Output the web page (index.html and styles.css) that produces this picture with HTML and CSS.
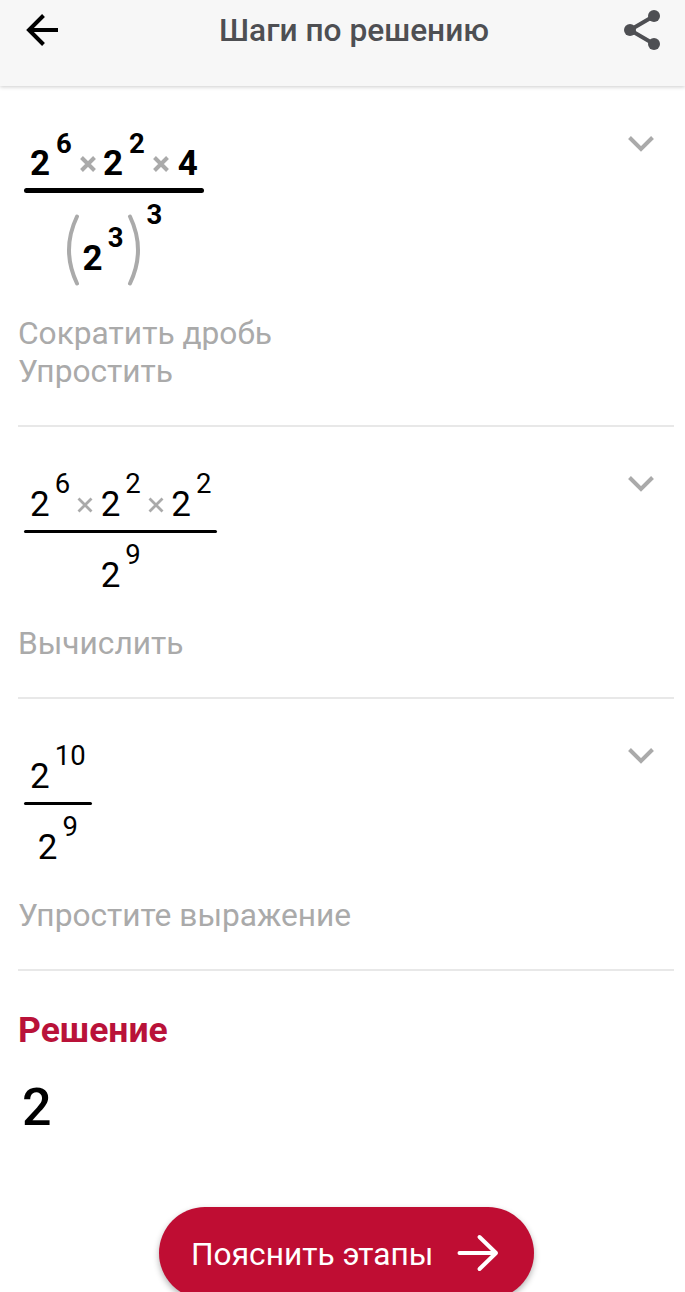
FILE: index.html
```html
<!DOCTYPE html>
<html lang="ru">
<head>
<meta charset="utf-8">
<title>Шаги по решению</title>
<link rel="stylesheet" href="styles.css">
</head>
<body>
<div class="screen">
  <header class="header">
    <svg class="back" width="34" height="34" viewBox="0 0 34 34"><path d="M18.500 2.500 4 17l14.500 14.500M4 17h29" /></svg>
    <h1 class="title">Шаги по решению</h1>
    <svg class="share" width="38" height="42" viewBox="0 0 38 42"><path d="M31 7 7 21l24 14"/><circle cx="31" cy="7" r="6"/><circle cx="7" cy="21" r="6"/><circle cx="31" cy="35" r="6"/></svg>
  </header>
  <main class="steps">
    <section class="step step-first">
      <div class="fraction bold">
        <div class="row">
          <span class="base">2</span><span class="exp">6</span>
          <svg class="times" width="16" height="16" viewBox="0 0 16 16"><path d="m1.500 1.500 13 13m0-13-13 13"/></svg>
          <span class="base">2</span><span class="exp">2</span>
          <svg class="times" width="16" height="16" viewBox="0 0 16 16"><path d="m1.500 1.500 13 13m0-13-13 13"/></svg>
          <span class="base last">4</span>
        </div>
        <div class="bar"></div>
        <div class="row group">
          <svg class="paren" width="14" height="72" viewBox="0 0 14 72"><path d="M11 2.500Q-5 36 11 69.500"/></svg>
          <span class="base">2</span><span class="exp">3</span>
          <svg class="paren right" width="14" height="72" viewBox="0 0 14 72"><path d="M3 2.500Q19 36 3 69.500"/></svg>
          <span class="exp outer">3</span>
        </div>
      </div>
      <svg class="chevron" width="28" height="18" viewBox="0 0 28 18"><path d="m2.500 2.500 11.500 11.500L25.500 2.500"/></svg>
      <p class="label">Сократить дробь<br>Упростить</p>
    </section>
    <section class="step">
      <div class="fraction">
        <div class="row">
          <span class="base">2</span><span class="exp">6</span>
          <svg class="times" width="16" height="16" viewBox="0 0 16 16"><path d="m1.500 1.500 13 13m0-13-13 13"/></svg>
          <span class="base">2</span><span class="exp">2</span>
          <svg class="times" width="16" height="16" viewBox="0 0 16 16"><path d="m1.500 1.500 13 13m0-13-13 13"/></svg>
          <span class="base">2</span><span class="exp">2</span>
        </div>
        <div class="bar"></div>
        <div class="row"><span class="base">2</span><span class="exp">9</span></div>
      </div>
      <svg class="chevron" width="28" height="18" viewBox="0 0 28 18"><path d="m2.500 2.500 11.500 11.500L25.500 2.500"/></svg>
      <p class="label">Вычислить</p>
    </section>
    <section class="step">
      <div class="fraction">
        <div class="row"><span class="base">2</span><span class="exp">10</span></div>
        <div class="bar"></div>
        <div class="row"><span class="base">2</span><span class="exp">9</span></div>
      </div>
      <svg class="chevron" width="28" height="18" viewBox="0 0 28 18"><path d="m2.500 2.500 11.500 11.500L25.500 2.500"/></svg>
      <p class="label">Упростите выражение</p>
    </section>
  </main>
  <section class="solution">
    <h2 class="solution-title">Решение</h2>
    <p class="answer">2</p>
  </section>
  <button class="explain">
    <span>Пояснить этапы</span>
    <svg width="42" height="38" viewBox="0 0 42 38"><path d="M2.500 19H39M22.500 3 39 19 22.500 35"/></svg>
  </button>
</div>
</body>
</html>
```
FILE: styles.css
```css
* { box-sizing: border-box; }
body { margin: 0; background: #fff; font-family: Roboto, "Noto Sans", sans-serif; color: #000; }
h1, h2, p { margin: 0; }
svg { display: block; flex: none; fill: none; }
.screen { display: flex; flex-direction: column; height: 1292px; overflow: hidden; }

.header {
  display: flex; align-items: flex-start; flex: none;
  height: 86px; padding: 0 24px 0 25px; background: #f7f7f7;
  box-shadow: 0 1px 4px rgba(0, 0, 0, .2);
}
.back { margin-top: 13px; stroke: #000; stroke-width: 4; }
.title { margin: 12px auto 0 160px; font-size: 31.7px; line-height: 38px; font-weight: 500; color: #4e4f53; white-space: nowrap; }
.share { margin-top: 9px; stroke: #4e4f53; stroke-width: 4; }
.share circle { fill: #4e4f53; stroke: none; }

.steps { flex: none; padding: 0 11px 0 18px; }
.step {
  display: grid; grid-template-columns: 1fr auto; grid-template-rows: 155px auto;
  align-items: start;
  height: 272px; padding-top: 43px; border-bottom: 2px solid #e8e8e8;
}
.step-first { height: 341px; padding-top: 44px; grid-template-rows: 185px auto; }

.fraction { display: flex; flex-direction: column; align-items: center; justify-self: start; margin-left: 6px; }
.row { display: flex; align-items: flex-start; height: 60px; padding: 0 6px; }
.row .base { margin-top: 17px; font-size: 35px; line-height: 35px; }
.row .exp { margin-left: 5px; font-size: 27.5px; line-height: 28px; }
.bar { width: 100%; height: 3px; border-radius: 2px; background: #000; }
.bar + .row { margin-top: 8px; }
.times { margin: 27px 7.500px 0 7px; stroke: #aaa; stroke-width: 2.800; stroke-linecap: butt; }
.bold { font-weight: 700; }
.bold .row { height: 58px; }
.bold .bar { height: 5px; border-radius: 3px; }
.bold .exp { margin-left: 6px; }
.bold .times { margin: 26px 7px 0 8px; stroke-width: 4; }
.bold .base { margin-top: 16px; }
.bold .base.last { margin-left: 2px; }
.bold .group { height: 99px; margin: 8px 0 0; }
.group .paren { margin-top: 13px; stroke: #aaa; stroke-width: 4; stroke-linecap: round; }
.bold .group .base { margin: 40px 0 0 3px; }
.bold .group .exp { margin: 23px 0 0 5px; }
.bold .group .exp.outer { margin: 0 0 0 5px; }
.group .right { margin-left: 4px; }

.chevron { margin: 5px 19px 0 0; stroke: #aaa; stroke-width: 4; }
.label { grid-column: 1 / -1; font-size: 31.7px; line-height: 38px; color: #aaa; }

.solution { flex: none; height: 236px; padding: 38px 18px 0; }
.solution-title { font-size: 35.500px; line-height: 42px; font-weight: 700; color: #b91239; }
.answer { margin: 26px 0 0 4px; font-size: 52px; line-height: 62px; font-weight: 500; }

.explain {
  display: flex; align-items: center; align-self: flex-start; flex: none;
  width: 375px; height: 92px; margin-left: 159px; padding: 0 35px 0 32px;
  justify-content: space-between; border: 0; border-radius: 46px;
  background: #bf0d33; color: #fff; font: 400 31.7px/38px Roboto, "Noto Sans", sans-serif;
  white-space: nowrap; box-shadow: 0 3px 6px rgba(0, 0, 0, .3);
}
.explain span { padding-top: 3px; }
.explain svg { stroke: #fff; stroke-width: 4; stroke-linecap: round; stroke-linejoin: round; }
```
